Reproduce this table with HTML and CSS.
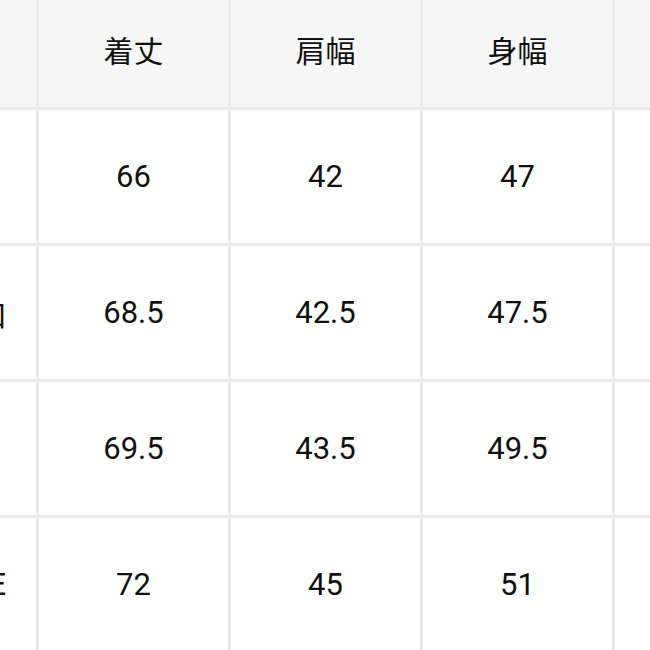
FILE: index.html
```html
<!DOCTYPE html>
<html lang="ja">
<head>
<meta charset="utf-8">
<title>サイズ表</title>
<link rel="stylesheet" href="styles.css">
</head>
<body>
<div class="table">
  <div class="cell head label"></div>
  <div class="cell head">着丈</div>
  <div class="cell head">肩幅</div>
  <div class="cell head">身幅</div>
  <div class="cell head"></div>

  <div class="cell label"></div>
  <div class="cell">66</div>
  <div class="cell">42</div>
  <div class="cell">47</div>
  <div class="cell"></div>

  <div class="cell label"><span class="cjk">口</span></div>
  <div class="cell">68.5</div>
  <div class="cell">42.5</div>
  <div class="cell">47.5</div>
  <div class="cell"></div>

  <div class="cell label"></div>
  <div class="cell">69.5</div>
  <div class="cell">43.5</div>
  <div class="cell">49.5</div>
  <div class="cell"></div>

  <div class="cell label"><span class="latin">E</span></div>
  <div class="cell">72</div>
  <div class="cell">45</div>
  <div class="cell">51</div>
  <div class="cell"></div>
</div>
</body>
</html>
```
FILE: styles.css
```css
html, body {
  margin: 0;
  padding: 0;
  background: #ffffff;
  overflow: hidden;
}
body {
  width: 650px;
  height: 650px;
  font-family: Roboto, "Noto Sans CJK JP", sans-serif;
  color: #111111;
}
.table {
  display: grid;
  grid-template-columns: 36px 189px 189px 189px 189px;
  grid-template-rows: 107px 133px 133px 133px 133px;
  gap: 3px;
  background: #ebebeb;
  width: max-content;
}
.cell {
  background: #ffffff;
  display: flex;
  align-items: center;
  justify-content: center;
  font-size: 31px;
  white-space: nowrap;
  overflow: visible;
}
.cell.head {
  background: #f7f7f7;
  font-family: "Noto Sans CJK JP", sans-serif;
  font-size: 30px;
  padding-bottom: 9px;
}
.cell.label {
  justify-content: flex-end;
  padding-right: 29px;
  overflow: hidden;
}
.cjk {
  font-family: "Noto Sans CJK JP", sans-serif;
  font-size: 30px;
}
.latin {
  padding-right: 1px;
}
```
